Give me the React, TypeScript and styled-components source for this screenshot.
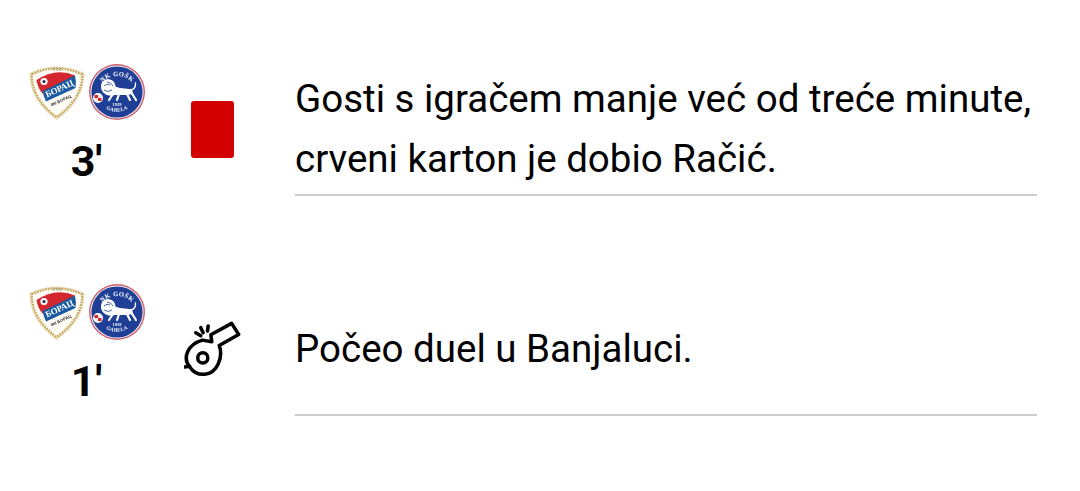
import React from "react";
import styled, { createGlobalStyle } from "styled-components";

const Global = createGlobalStyle`
  html, body { margin: 0; padding: 0; background: #fff; }
  body { font-family: Roboto, "Noto Sans", sans-serif; color: #000; }
`;

const Feed = styled.main`
  display: flex;
  flex-direction: column;
  gap: 88px;
  padding: 64px 43px 0 29px;
  height: 491px;
  box-sizing: border-box;
  overflow: hidden;
`;

const Row = styled.article`
  display: grid;
  grid-template-columns: 116px 150px 1fr;
`;

const Side = styled.div`
  display: flex;
  flex-direction: column;
  align-items: center;
`;

const Crests = styled.div`
  display: flex;
  gap: 4px;
  filter: blur(0.5px);
`;

const Minute = styled.div`
  font-size: 43px;
  font-weight: 700;
  line-height: 50px;
  margin-top: 16px;
  margin-right: 1px;
`;

const IconCell = styled.div`
  display: flex;
  align-items: center;
  justify-content: center;
  height: 130px;
  padding-right: 16px;
  box-sizing: border-box;
`;

const RedCard = styled.div`
  width: 43px;
  height: 57px;
  background: #d20000;
  border-radius: 3px;
`;

const Body = styled.div`
  height: 132px;
  box-sizing: border-box;
  border-bottom: 2px solid #cccccc;
  display: flex;
  align-items: center;
`;

const Text = styled.p`
  margin: 0;
  font-size: 38.5px;
  line-height: 60px;
  font-weight: 400;
  color: #000;
  white-space: nowrap;
`;

const Crest = () => (
  <svg width="56" height="56" viewBox="0 0 56 56">
    <path d="M0.5 9 Q27 -4 55.5 9 Q56 36 27.5 56 Q0 36 0.5 9Z" fill="#e6d9b4" />
    <path d="M3 10.5 Q27 -1.5 53 10.5 Q53.5 34 27.5 53 Q2.5 34 3 10.5Z" fill="#fffdf6" stroke="#c4a860" strokeWidth="2.2" strokeDasharray="1.6 1.2" />
    <path d="M7.5 16 Q27 3 46 11.5 L45 14 L14 30 Q8.5 24 7.5 16Z" fill="#d4262f" />
    <path d="M13.5 27 L46 11.5 Q47.5 18 46.5 24 L17 37.5 Q14.5 32 13.5 27Z" fill="#1b5aa0" />
    <text x="30.5" y="27.5" textAnchor="middle" fontFamily="'Liberation Serif', serif" fontWeight="700" fontSize="8.8" fill="#fff" transform="rotate(-25 30.5 25)">БОРАЦ</text>
    <text x="32" y="38" textAnchor="middle" fontFamily="'Liberation Sans', sans-serif" fontWeight="700" fontSize="4.2" fill="#333" transform="rotate(-25 32 37)">ФК БОРАЦ</text>
    <text x="28" y="6.5" textAnchor="middle" fontFamily="'Liberation Serif', serif" fontSize="5" fill="#8f7c4a">1926</text>
    <circle cx="15" cy="17.5" r="3.6" fill="#fff" />
    <circle cx="15" cy="17.5" r="1.5" fill="#1d2a4a" />
  </svg>
);

const Gosk = () => (
  <svg width="56" height="56" viewBox="0 0 56 56">
    <defs>
      <path id="top-arc" d="M8 28 A20.5 20.5 0 0 1 48 28" />
      <path id="bottom-arc" d="M8 34 A21.5 21.5 0 0 0 48 34" />
    </defs>
    <circle cx="28" cy="28" r="28" fill="#c8616e" />
    <circle cx="28" cy="28" r="26.6" fill="#f4eef2" />
    <circle cx="28" cy="28" r="25.6" fill="#1f3f97" />
    <text fontFamily="'Liberation Serif', serif" fontWeight="700" fontSize="6.5" fill="#fff" letterSpacing="0.4">
      <textPath href="#top-arc" startOffset="50%" textAnchor="middle">NK GOŠK</textPath>
    </text>
    <text fontFamily="'Liberation Serif', serif" fontWeight="700" fontSize="5" fill="#fff" letterSpacing="0.3">
      <textPath href="#bottom-arc" startOffset="50%" textAnchor="middle">GABELA</textPath>
    </text>
    <text x="28" y="41.5" textAnchor="middle" fontFamily="'Liberation Serif', serif" fontWeight="700" fontSize="4.4" fill="#fff">1919</text>
    <path d="M12 23 Q12 15.5 19 15 Q25.5 15.5 26.5 22 L26 31 Q20 33 16 30 Q12 27 12 23Z" fill="#fff" />
    <path d="M24 22 Q33 25.5 43 25 L44 30 L38 31 L30 31 L24 31Z" fill="#fff" />
    <path d="M42 26 Q47 25 46.5 19" stroke="#fff" strokeWidth="1.3" fill="none" strokeLinecap="round" />
    <path d="M42 28 L47 36 M38 30 L41 36 M30 30 L28 36 M24 30 L20 36" stroke="#fff" strokeWidth="2.2" fill="none" strokeLinecap="round" />
    <path d="M15 22 Q18 19 21 21 M15 26 Q19 29 23 26 M18 18 Q22 18 24 22" stroke="#1f3f97" strokeWidth="0.8" fill="none" />
    <circle cx="9" cy="34" r="5" fill="#fff" />
    <path d="M5.5 31h3.5v3H5.5zM9 34h3.5v3H9z" fill="#d3262f" />
    <path d="M9 31h3.5v3H9zM5.5 34H9v3H5.5z" fill="#f3e9e9" />
  </svg>
);

const Whistle = () => (
  <svg width="57" height="57" viewBox="45 35 170 170" fill="none" stroke="#000" strokeWidth="10.5" strokeLinecap="round" strokeLinejoin="round">
    <path d="M100 92 L128 97 L125 76 L187 42 L208 75 L150 108 Q160 135 147 163 C130 200 85 205 62 172 C40 145 55 105 100 92Z" />
    <path d="M47 172 L62 170" />
    <circle cx="101" cy="145" r="15" />
    <path d="M80 70 L95 79 M95 55 L102 70 M117 50 L115 65" />
  </svg>
);

const Entry = ({ minute, icon, text }: { minute: string; icon: React.ReactNode; text: React.ReactNode }) => (
  <Row>
    <Side>
      <Crests>
        <Crest />
        <Gosk />
      </Crests>
      <Minute>{minute}</Minute>
    </Side>
    <IconCell>{icon}</IconCell>
    <Body>
      <Text>{text}</Text>
    </Body>
  </Row>
);

export default function App() {
  return (
    <>
      <Global />
      <Feed>
        <Entry
          minute="3'"
          icon={<RedCard />}
          text={<>Gosti s igračem manje već od treće minute,<br />crveni karton je dobio Račić.</>}
        />
        <Entry minute="1'" icon={<Whistle />} text="Počeo duel u Banjaluci." />
      </Feed>
    </>
  );
}
